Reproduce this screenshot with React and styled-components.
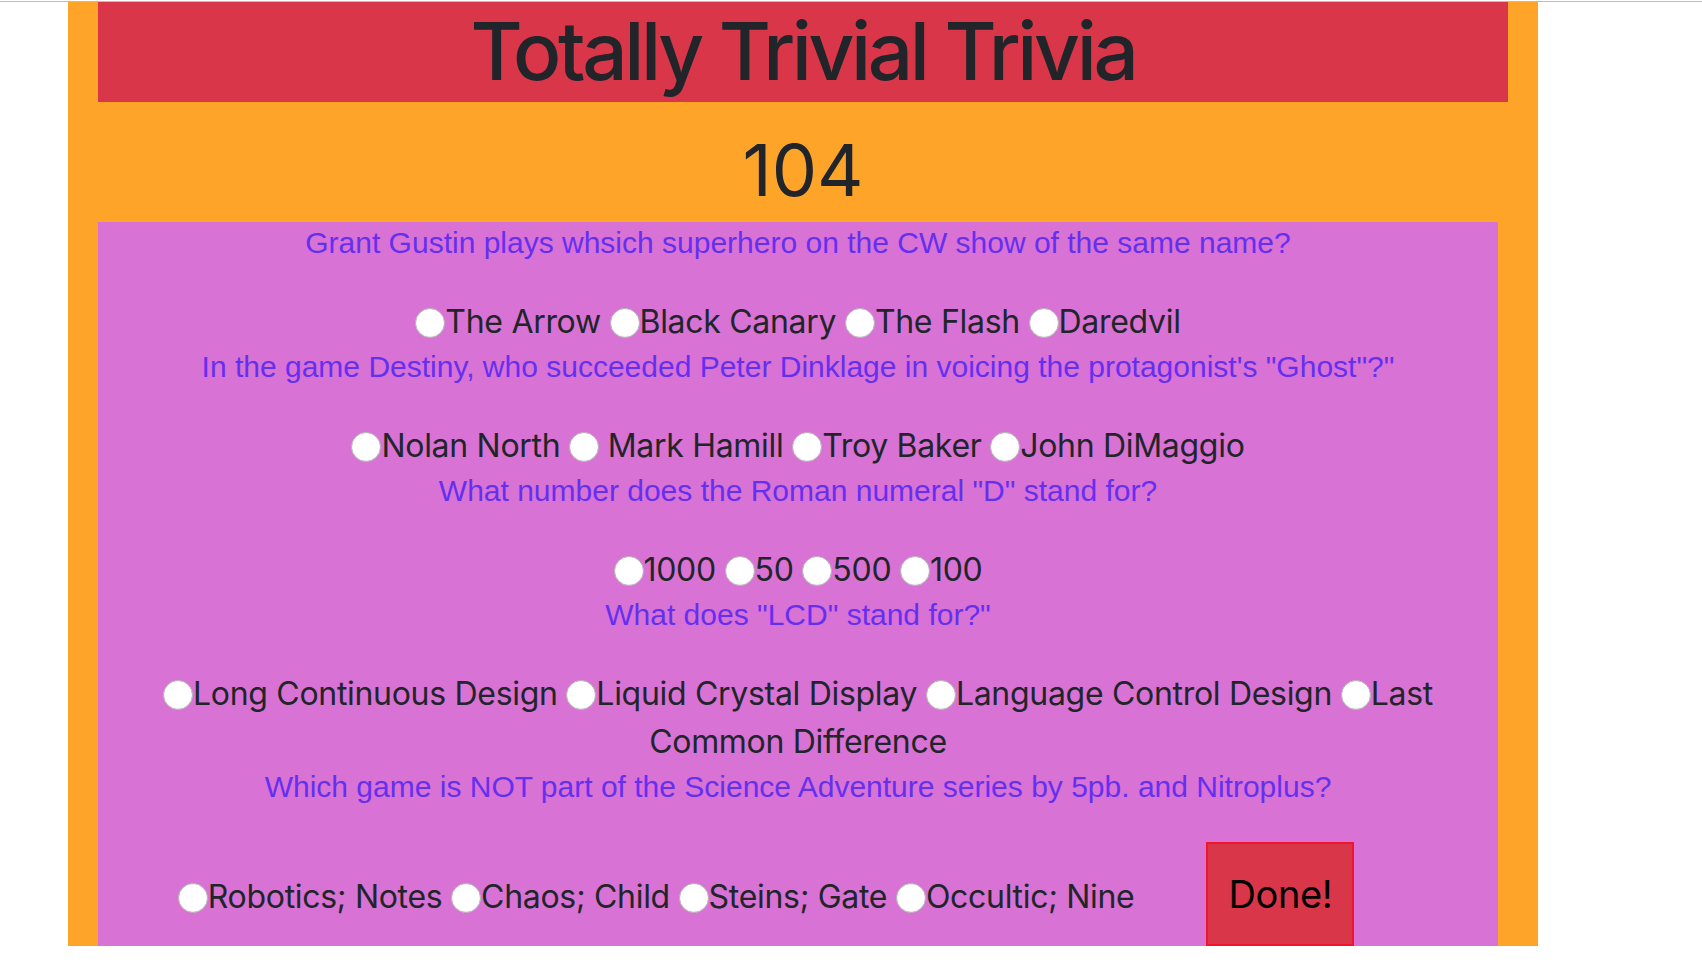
import styled, { createGlobalStyle } from "styled-components";

const GlobalStyle = createGlobalStyle`
  html, body {
    margin: 0;
    padding: 0;
    background: #fff;
  }
`;

const TopRule = styled.div`
  height: 1px;
  margin-top: 1px;
  background: #bcbcbc;
`;

const Page = styled.div`
  width: 1470px;
  margin-left: 68px;
  background: #fda429;
`;

const Header = styled.header`
  margin: 0 30px;
  height: 100px;
  background: #d9364a;
  h1 {
    margin: 0;
    font-family: Inter, "Liberation Sans", sans-serif;
    font-size: 80px;
    font-weight: 500;
    letter-spacing: -3.4px;
    line-height: 98px;
    color: #212529;
    text-align: center;
  }
`;

const Score = styled.div`
  height: 104px;
  padding-top: 16px;
  font-family: Inter, "Liberation Sans", sans-serif;
  font-size: 72px;
  line-height: 104px;
  color: #212529;
  text-align: center;
`;

const QuizBox = styled.form`
  margin: 0 40px 0 30px;
  background: #d872d4;
  text-align: center;
`;

const Question = styled.div`
  font-family: "Liberation Sans", Arial, sans-serif;
  font-size: 30px;
  line-height: 42px;
  color: #652ff0;
`;

const Answers = styled.div`
  margin-top: 34px;
  font-family: Inter, "Liberation Sans", sans-serif;
  font-size: 32px;
  letter-spacing: -0.3px;
  line-height: 48px;
  color: #212529;
`;

const Radio = styled.input.attrs({ type: "radio" })`
  appearance: none;
  width: 30px;
  height: 30px;
  margin: 0;
  border-radius: 50%;
  border: 1px solid #b4b4b4;
  background: #fff;
  box-shadow: inset 0 -1px 1px rgba(0, 0, 0, 0.06);
  vertical-align: -5px;
`;

const DoneButton = styled.button`
  height: 104px;
  margin: 0 64px 0 72px;
  padding: 0 20px;
  border: 2px solid #f2142a;
  background: #d9364a;
  font-family: Inter, "Liberation Sans", sans-serif;
  font-size: 38px;
  letter-spacing: -0.4px;
  line-height: 46px;
  color: #000;
  vertical-align: baseline;
`;

const questions = [
  {
    q: "Grant Gustin plays whsich superhero on the CW show of the same name?",
    a: ["The Arrow", "Black Canary", "The Flash", "Daredvil"],
  },
  {
    q: 'In the game Destiny, who succeeded Peter Dinklage in voicing the protagonist\'s "Ghost"?"',
    a: ["Nolan North", " Mark Hamill", "Troy Baker", "John DiMaggio"],
  },
  {
    q: 'What number does the Roman numeral "D" stand for?',
    a: ["1000", "50", "500", "100"],
  },
  {
    q: 'What does "LCD" stand for?"',
    a: [
      "Long Continuous Design",
      "Liquid Crystal Display",
      "Language Control Design",
      "Last Common Difference",
    ],
  },
  {
    q: "Which game is NOT part of the Science Adventure series by 5pb. and Nitroplus?",
    a: ["Robotics; Notes", "Chaos; Child", "Steins; Gate", "Occultic; Nine"],
  },
];

export default function App() {
  return (
    <>
      <GlobalStyle />
      <TopRule />
      <Page>
        <Header>
          <h1>Totally Trivial Trivia</h1>
        </Header>
        <Score>104</Score>
        <QuizBox onSubmit={(e) => e.preventDefault()}>
          {questions.map((item, i) => (
            <div key={i}>
              <Question>{item.q}</Question>
              <Answers>
                {item.a.map((ans, j) => (
                  <span key={j}>
                    <Radio name={`q${i}`} />
                    {ans}
                    {j < item.a.length - 1 ? " " : ""}
                  </span>
                ))}
                {i === questions.length - 1 && <DoneButton>Done!</DoneButton>}
              </Answers>
            </div>
          ))}
        </QuizBox>
      </Page>
    </>
  );
}
